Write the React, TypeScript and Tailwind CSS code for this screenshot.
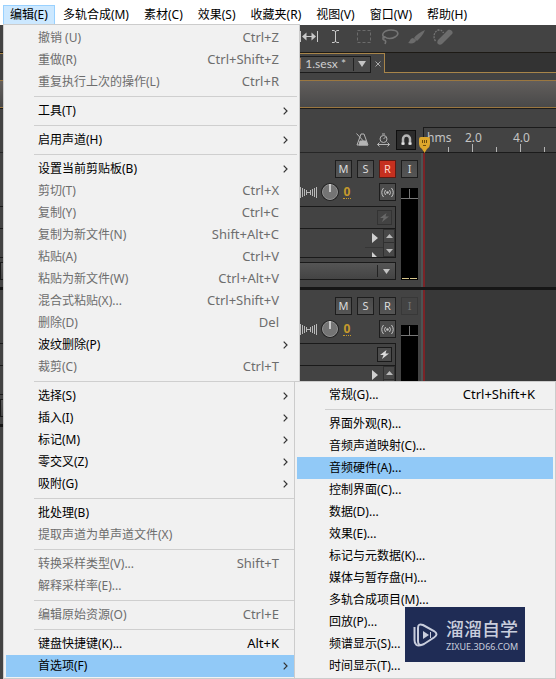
import React from 'react';
import clsx from 'clsx';

type MenuEntry =
  | { kind: 'sep' }
  | { kind: 'item'; label: string; shortcut?: string; disabled?: boolean; sub?: boolean; active?: boolean };

const sep: MenuEntry = { kind: 'sep' };
const item = (label: string, opts: { shortcut?: string; disabled?: boolean; sub?: boolean; active?: boolean } = {}): MenuEntry => ({
  kind: 'item',
  label,
  ...opts
});

const menuBar = ['编辑(E)', '多轨合成(M)', '素材(C)', '效果(S)', '收藏夹(R)', '视图(V)', '窗口(W)', '帮助(H)'];

const editMenu: MenuEntry[] = [
  item('撤销 (U)', { shortcut: 'Ctrl+Z', disabled: true }),
  item('重做(R)', { shortcut: 'Ctrl+Shift+Z', disabled: true }),
  item('重复执行上次的操作(L)', { shortcut: 'Ctrl+R', disabled: true }),
  sep,
  item('工具(T)', { sub: true }),
  sep,
  item('启用声道(H)', { sub: true }),
  sep,
  item('设置当前剪贴板(B)', { sub: true }),
  item('剪切(T)', { shortcut: 'Ctrl+X', disabled: true }),
  item('复制(Y)', { shortcut: 'Ctrl+C', disabled: true }),
  item('复制为新文件(N)', { shortcut: 'Shift+Alt+C', disabled: true }),
  item('粘贴(A)', { shortcut: 'Ctrl+V', disabled: true }),
  item('粘贴为新文件(W)', { shortcut: 'Ctrl+Alt+V', disabled: true }),
  item('混合式粘贴(X)...', { shortcut: 'Ctrl+Shift+V', disabled: true }),
  item('删除(D)', { shortcut: 'Del', disabled: true }),
  item('波纹删除(P)', { sub: true }),
  item('裁剪(C)', { shortcut: 'Ctrl+T', disabled: true }),
  sep,
  item('选择(S)', { sub: true }),
  item('插入(I)', { sub: true }),
  item('标记(M)', { sub: true }),
  item('零交叉(Z)', { sub: true }),
  item('吸附(G)', { sub: true }),
  sep,
  item('批处理(B)'),
  item('提取声道为单声道文件(X)', { disabled: true }),
  sep,
  item('转换采样类型(V)...', { shortcut: 'Shift+T', disabled: true }),
  item('解释采样率(E)...', { disabled: true }),
  sep,
  item('编辑原始资源(O)', { shortcut: 'Ctrl+E', disabled: true }),
  sep,
  item('键盘快捷键(K)...', { shortcut: 'Alt+K' }),
  item('首选项(F)', { sub: true, active: true })
];

const preferencesMenu: MenuEntry[] = [
  item('常规(G)...', { shortcut: 'Ctrl+Shift+K' }),
  sep,
  item('界面外观(R)...'),
  item('音频声道映射(C)...'),
  item('音频硬件(A)...', { active: true }),
  item('控制界面(C)...'),
  item('数据(D)...'),
  item('效果(E)...'),
  item('标记与元数据(K)...'),
  item('媒体与暂存盘(H)...'),
  item('多轨合成项目(M)...'),
  item('回放(P)...'),
  item('频谱显示(S)...'),
  item('时间显示(T)...')
];

const MenuList: React.FC<{ entries: MenuEntry[] }> = ({ entries }) => (
  <ul>
    {entries.map((entry, i) =>
      entry.kind === 'sep' ? (
        <li key={i} className="flex h-[7px] items-center pl-7" role="separator">
          <span className="h-px w-full bg-[#cfcfcf]" />
        </li>
      ) : (
        <li key={i}>
          <button
            type="button"
            disabled={entry.disabled}
            className={clsx(
              'flex h-[22px] w-full items-center justify-between pr-1.5 pl-8 text-left whitespace-nowrap',
              entry.active && 'bg-[#91c9f7]',
              entry.disabled ? 'text-[#6d6d6d]' : 'text-black'
            )}
          >
            <span>{entry.label}</span>
            {entry.shortcut && <span className="pr-3 text-[13px]">{entry.shortcut}</span>}
            {entry.sub && (
              <svg className="mr-[3px] h-2 w-[5px]" viewBox="0 0 5 8" fill="none" stroke="#333">
                <path d="M.7.7 4 4 .7 7.3" strokeWidth="1.2" />
              </svg>
            )}
          </button>
        </li>
      )
    )}
  </ul>
);

const ToolStrip = () => (
  <div className="flex h-[27px] items-center bg-[#434343] pl-[300px]">
    <svg className="h-[27px] w-[160px]" viewBox="300 25 160 27" fill="none">
      <g stroke="#c9c9c9">
        <path d="M300.5 31v11M317.5 31v11M303 36.500h12" />
        <path d="M306.500 32.500 302 36.500l4.500 4zM311.500 32.500l4.500 4-4.500 4z" fill="#c9c9c9" stroke="none" />
        <path d="M332 30.500h2l1.500 1 1.500-1h2M335.500 31v11M332 42.500h2l1.500-1 1.500 1h2" />
      </g>
      <rect x="357.500" y="30.500" width="13" height="12" stroke="#6c6c6c" strokeDasharray="3 2" />
      <path
        d="M385 38c-5-3-1-8 6-8s9 4 4 7c-3 2-8 2-10 0-2-1-3 2-1 3 2 0 2 2 1 4"
        stroke="#747474"
        strokeWidth="1.600"
      />
      <g fill="#6c6c6c">
        <path d="M425 30c-5 2-9 5-11 8l3 3c3-3 6-6 8-11zM413 38c-3 0-3 4-5 5 4 1 8 0 8-3z" />
        <path d="M452 31c-2-2-4-1-5 0l-9 9c-1 2-1 3 0 4s3 1 4 0l9-9c2-1 2-3 1-4z" />
      </g>
      <path d="M435.500 41c-3-4-1-10 3-11 3 0 4 1 5 3" stroke="#747474" strokeDasharray="2 1" strokeWidth="1.300" />
    </svg>
  </div>
);

const SessionTabs = () => (
  <div className="flex h-[21px] border-t border-[#1d1a15] bg-[#333]">
    <div className="flex w-[385px] items-center justify-end border-t border-r border-[#a8854a] bg-[#434343] pt-px">
      <button type="button" className="flex h-[17px] items-center border border-[#1c1c1c] bg-[#4a4a4a] text-[12px] text-[#d0d0d0]">
        <span className="pl-2 font-['Lato','Noto_Sans_CJK_SC',sans-serif]">目 1.sesx *</span>
        <span className="ml-[7px] flex h-[13px] w-[17px] items-center justify-center border-l border-[#222]">
          <svg className="h-[6px] w-[8px]" viewBox="0 0 8 6">
            <path d="M0 0h8L4 6z" fill="#c4c4c4" />
          </svg>
        </span>
      </button>
      <button type="button" aria-label="关闭" className="flex w-[13px] items-center justify-center">
        <svg className="h-[6px] w-[6px]" viewBox="0 0 6 6" stroke="#aaa">
          <path d="M.5.5l5 5M5.500.5l-5 5" />
        </svg>
      </button>
    </div>
    <div className="flex-1 border-b border-[#a8854a]" />
  </div>
);

const RulerRow = () => (
  <div className="flex h-[26px]">
    <div className="flex w-[423px] shrink-0 items-center justify-end gap-1.5 border-b border-[#262626] pr-[7px]">
      <svg className="h-[14px] w-[34px]" viewBox="357 131 34 14" fill="none" stroke="#b5b5b5">
        <path d="M357.500 131.500l11 12M362 132h3l4 11h-11z" />
        <path d="M361 139h6l1 4h-8z" fill="#b5b5b5" />
        <circle cx="384.500" cy="137" r="3.500" />
        <path d="M384.500 137l2-2M383 132h3M378.500 142.500h12M380.500 140.500l-2 2 2 2M388.500 140.500l2 2-2 2" />
      </svg>
      <button type="button" aria-label="吸附" className="flex h-5 w-5 items-center justify-center border border-[#0f0f0f] bg-[#2b2b2b]">
        <svg className="h-[11px] w-[11px]" viewBox="0 0 11 11" fill="none">
          <path d="M2 11V5a3.500 3.500 0 0 1 7 0v6" stroke="#b5b5b5" strokeWidth="2.500" />
          <path d="M.5 9.500h3M7.500 9.500h3" stroke="#e5e5e5" strokeWidth="2" />
        </svg>
      </button>
    </div>
    <div className="relative min-w-0 flex-1 overflow-hidden border-t border-b border-l border-[#1b1b1b] bg-[#434343] text-[12px] leading-[20px] text-[#c4c4c4]">
      <div className="flex">
        <span className="w-[41px] pl-[3px]">hms</span>
        <span className="w-12">2.0</span>
        <span>4.0</span>
      </div>
      <svg className="absolute bottom-0 left-0 h-2 w-[133px]" viewBox="424 144 133 8" stroke="#b5b5b5">
        <path d="M448.500 147v5M472.500 144v8M496.500 147v5M520.500 144v8M544.500 147v5" />
      </svg>
    </div>
  </div>
);

const trackButton = 'flex h-[18px] w-[17px] items-center justify-center border text-[11px]';
const trackButtonOff = 'border-[#1d1d1d] bg-linear-to-b from-[#4a4a4a] to-[#555] text-[#dcdcdc]';

const StereoIcon = () => (
  <svg className="h-[11px] w-[17px] shrink-0" viewBox="0 0 17 11" stroke="#b9b9b9">
    <path d="M.5 0v11M2.500 1v9M4.500 2v7M6.500 3v5M10.500 3v5M12.500 2v7M14.500 1v9M16.500 0v11M7 5.500h3" />
  </svg>
);

const Knob = () => (
  <svg className="ml-1 h-[18px] w-[18px] shrink-0" viewBox="0 0 18 18">
    <circle cx="9" cy="9" r="9" fill="#242424" />
    <circle cx="9" cy="9" r="7.500" fill="#747474" stroke="#929292" />
    <path d="M9 1v8" stroke="#e6e6e6" strokeWidth="1.500" />
  </svg>
);

const Track: React.FC<{ armed?: boolean; fxOn?: boolean }> = ({ armed, fxOn }) => (
  <section className="flex h-[137px] shrink-0 border-b-[3px] border-[#161616]">
    <div className="flex w-[396px] shrink-0 flex-col items-end">
      <div className="mt-[7px] flex gap-[5px]">
        <button type="button" className={clsx(trackButton, trackButtonOff)}>M</button>
        <button type="button" className={clsx(trackButton, trackButtonOff)}>S</button>
        <button
          type="button"
          className={clsx(trackButton, armed ? 'border-[#5a1b14] bg-[#c5301f] text-[#ffd9c9]' : trackButtonOff)}
        >
          R
        </button>
      </div>
      <div className="mt-[5px] flex h-[18px] items-center">
        <StereoIcon />
        <Knob />
        <span className="ml-1 w-2 border-b border-dotted border-[#c59a2c] text-center text-[12px] leading-[12px] font-bold text-[#c59a2c]">0</span>
        <button type="button" aria-label="监听" className="ml-7 flex h-[18px] w-[17px] items-center justify-center border border-[#1d1d1d] bg-[#4c4c4c]">
          <svg className="h-[11px] w-[13px] shrink-0" viewBox="0 0 13 11" fill="none" stroke="#c4c4c4">
            <circle cx="6.500" cy="5.500" r="1.300" fill="#c4c4c4" stroke="none" />
            <path d="M4.500 3q-2 2.500 0 5M8.500 3q2 2.500 0 5M2.500 1q-3.500 4.500 0 9M10.500 1q3.500 4.500 0 9" />
          </svg>
        </button>
      </div>
      <div className="mt-[5px] w-full border-y border-r border-[#1a1a1a]">
        <div className="flex h-[22px] items-center justify-end border-b border-[#1a1a1a] pr-[3px]">
          <button
            type="button"
            aria-label="效果"
            className={clsx('flex h-[15px] w-[15px] items-center justify-center border', fxOn ? 'border-[#1a1a1a] bg-[#4c4c4c]' : 'border-[#333]')}
          >
            <svg className="h-[9px] w-[9px]" viewBox="0 0 9 9" fill={fxOn ? '#dcdcdc' : '#686868'}>
              <path d="M6.500 0 0 5h3.500L2 9l7-5.500H5.500z" />
            </svg>
          </button>
        </div>
        <div className="flex h-[28px] justify-end">
          <svg className="h-[28px] w-[30px]" viewBox="0 0 30 28">
            <path d="M0 18.500h18" stroke="#363636" />
            <path d="M7 4v10l6-5zM7 23v5h5z" fill="#d0d0d0" />
            <path d="M18 0h12v28H18z" fill="#303030" />
            <path d="M19 1h10v12H19zM19 14h10v13H19z" fill="#484848" />
            <path d="M21 9l3.500-4L28 9zM21 20l3.500 4 3.500-4z" fill="#bababa" />
          </svg>
        </div>
      </div>
      <button
        type="button"
        aria-label="自动化模式"
        className="mt-1 flex h-[18px] w-full items-center justify-end border border-[#1a1a1a] bg-linear-to-b from-[#555] to-[#444]"
      >
        <span className="flex h-3 w-[18px] items-center justify-center border-l border-[#222]">
          <svg className="h-[5px] w-[7px]" viewBox="0 0 7 5">
            <path d="M0 0h7L3.500 5z" fill="#c4c4c4" />
          </svg>
        </span>
      </button>
    </div>
    <div className="flex w-[27px] shrink-0 flex-col items-start border-r-2 border-[#4d5454] pl-[5px]">
      <button
        type="button"
        className={clsx(trackButton, 'mt-[7px]', armed ? trackButtonOff : 'border-[#383838] text-[#747474]')}
      >
        I
      </button>
      <svg className="mt-[10px] h-[92px] w-[17px]" viewBox="0 0 17 92">
        <path d="M0 0h17v92H0z" fill="#000" />
        <path d="M0 10.500h17M8.500 1v9" stroke="#777" />
        <path d="M1 90.500h7M9 90.500h7" stroke="#d8c78c" />
      </svg>
    </div>
    <div className="flex-1 border-l-2 border-[#7a2428] bg-[#383838]" />
  </section>
);

const Watermark = () => (
  <div className="absolute right-[31px] bottom-[17px] flex h-[55px] w-[120px] items-center gap-2 bg-[#1f2c55] pl-2 text-[#c9cedd]">
    <svg className="h-[26px] w-[25px] shrink-0" viewBox="0 0 25 26" fill="none" stroke="#c9cedd" strokeWidth="2">
      <path d="M1.500 5v13q0 7 7 5" />
      <path d="M5 6q0-5 5-3l11 6q5 3 0 6.500l-10 6.500q-6 3-6-3z" />
      <path d="M10 9l6 4-6 4z" fill="#c9cedd" stroke="none" />
      <path d="M17.500 10v6" strokeWidth="1" />
    </svg>
    <div className="flex flex-col whitespace-nowrap">
      <span className="text-[18px] leading-6 font-medium">溜溜自学</span>
      <span className="text-[9px] leading-3">ZIXUE.3D66.COM</span>
    </div>
  </div>
);

const App: React.FC = () => {
  return (
    <div className="relative flex min-h-screen flex-col overflow-hidden bg-[#434343] font-['Noto_Sans','Noto_Sans_CJK_SC',sans-serif] text-[12px]">
      <nav className="flex h-[25px] items-end gap-px bg-white pl-[3px]">
        {menuBar.map((label, i) => (
          <button
            key={label}
            type="button"
            className={clsx(
              'h-5 border px-[6px] leading-[18px] whitespace-nowrap text-black',
              i === 0 ? 'border-[#99d1ff] bg-[#cce8ff]' : 'border-transparent'
            )}
          >
            {label}
          </button>
        ))}
      </nav>

      <main className="flex flex-1 flex-col">
        <ToolStrip />
        <SessionTabs />
        <div className="mt-[7px] h-7 border-y border-[#9b7740] bg-linear-to-b from-[#625e5c] to-[#494949]" />
        <div className="h-[19px] border-t border-[#1b1b1b]" />
        <RulerRow />
        <Track armed />
        <Track fxOn />
      </main>

      {/* Playhead marker */}
      <svg className="absolute top-[137px] left-[419px] h-[16px] w-[12px]" viewBox="0 0 12 16">
        <path d="M0 2q0-2 2-2h7q2 0 2 2v5q0 3-3 5l-2.500 4-2.500-4q-3-2-3-5z" fill="#dda72c" />
        <path d="M3.500 3v3M5.500 3v3M7.500 3v3M4 8.500h3" stroke="#6e4d0c" />
      </svg>

      {/* Edit menu */}
      <div className="absolute top-6 bottom-0 left-[3px] w-[297px] border border-[#cccccc] bg-[#f1f1f1] px-0.5 pt-0.5">
        <MenuList entries={editMenu} />
      </div>

      {/* Preferences submenu */}
      <div className="absolute top-[381px] right-0 bottom-0 left-[294px] border border-[#cccccc] bg-[#f1f1f1] px-0.5 pt-0.5">
        <MenuList entries={preferencesMenu} />
      </div>

      <Watermark />
    </div>
  );
};

export default App;
